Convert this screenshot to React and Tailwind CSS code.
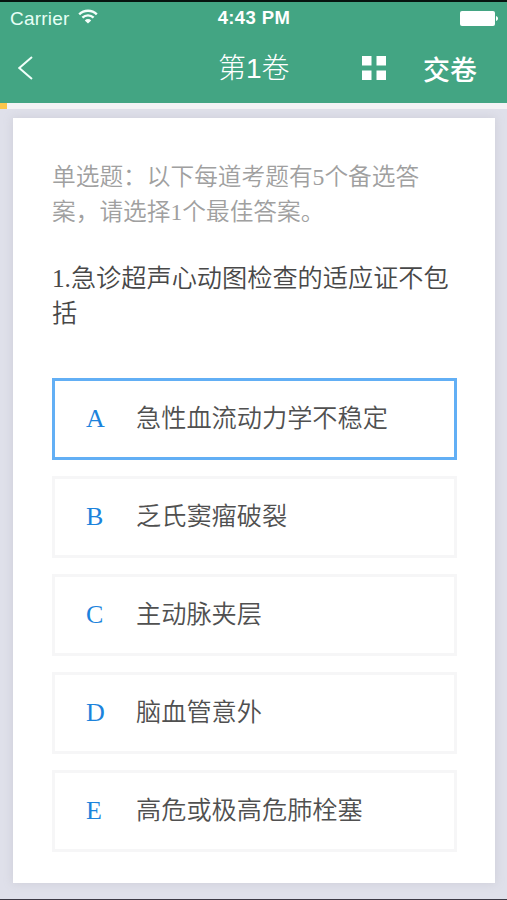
import React, { useState } from "react";

const options = [
  { key: "A", text: "急性血流动力学不稳定" },
  { key: "B", text: "乏氏窦瘤破裂" },
  { key: "C", text: "主动脉夹层" },
  { key: "D", text: "脑血管意外" },
  { key: "E", text: "高危或极高危肺栓塞" },
];

const StatusBar = () => {
  return (
    <div className="grid grid-cols-3 items-center h-8 pl-[10px] pr-[9px] font-['Liberation_Sans',sans-serif] text-[19px] leading-none">
      <div className="flex items-center gap-[9px] text-[#e6fff5]">
        <span className="tracking-[0.2px]">Carrier</span>
        <svg width="20" height="15" viewBox="0 0 20 15" fill="none" className="mb-[3px]">
          <path d="M1.2 5.3a12.6 12.6 0 0 1 17.6 0" stroke="#f4fffb" strokeWidth="2.4" />
          <path d="M4.4 8.7a8 8 0 0 1 11.2 0" stroke="#f4fffb" strokeWidth="2.4" />
          <path d="M10 14.6 6.8 11.4a4.6 4.6 0 0 1 6.4 0z" fill="#f4fffb" />
        </svg>
      </div>
      <span className="text-center font-bold text-[18.5px] tracking-[0.4px] whitespace-nowrap pt-px">
        4:43 PM
      </span>
      <svg width="38" height="15" viewBox="0 0 38 15" className="justify-self-end" fill="#fff">
        <rect width="35" height="15" rx="2" />
        <path d="M36 5c1.4.5 2 1.5 2 2.5s-.6 2-2 2.5z" />
      </svg>
    </div>
  );
};

const NavBar = () => {
  return (
    <div className="flex items-center h-[68px] pl-[18px] pr-[29px]">
      <button aria-label="返回" className="w-[200px]">
        <svg width="15" height="24" viewBox="0 0 15 24" fill="none">
          <path d="M14 1 1.3 12 14 23" stroke="#f0fffa" strokeWidth="2" />
        </svg>
      </button>
      <h1 className="w-[144px] pt-0.5 text-[28px] leading-none font-light whitespace-nowrap font-['Liberation_Sans','Noto_Sans_CJK_SC',sans-serif]">
        第1卷
      </h1>
      <button aria-label="答题卡" className="w-[61px]">
        <svg width="24" height="24" viewBox="0 0 24 24" fill="#fff">
          <rect width="9.5" height="9.5" />
          <rect x="14.5" width="9.5" height="9.5" />
          <rect y="14.5" width="9.5" height="9.5" />
          <rect x="14.5" y="14.5" width="9.5" height="9.5" />
        </svg>
      </button>
      <button className="text-[27px] leading-none font-medium whitespace-nowrap">交卷</button>
    </div>
  );
};

const App = () => {
  const [selected, setSelected] = useState("A");

  return (
    <div className="flex flex-col w-[507px] h-[900px] overflow-hidden bg-[#dfe0ea] border-t-2 border-t-[#07140f] border-b border-b-[#3c3a45] font-['Noto_Sans_CJK_SC',sans-serif]">
      <header className="flex flex-col h-[101px] bg-[#43a583] text-white">
        <StatusBar />
        <NavBar />
      </header>
      <div className="h-[6px] bg-[#f3f3f5]">
        <div className="w-[7px] h-full bg-[#fbc64b]" />
      </div>
      <main className="mt-[9px] ml-[13px] mr-3 h-[765px] bg-white shadow-[0_0_9px_1px_#d0d0da] pl-[39px] pr-[38px] pt-[42px]">
        <p className="text-[23.7px] leading-[35px] font-[350] text-[#a0a0a0] font-['Liberation_Serif','Noto_Sans_CJK_SC',sans-serif]">
          单选题：以下每道考题有5个备选答
          <br />
          案，请选择1个最佳答案。
        </p>
        <p className="mt-[31px] text-[25.2px] leading-[35px] text-[#484848] font-[350] whitespace-nowrap font-['Liberation_Serif','Noto_Sans_CJK_SC',sans-serif]">
          1.急诊超声心动图检查的适应证不包
          <br />括
        </p>
        <ul className="flex flex-col gap-4 mt-[47px]">
          {options.map((item) => (
            <li
              key={item.key}
              onClick={() => setSelected(item.key)}
              className={`flex items-center h-[82px] border-3 pl-[31px] ${
                selected === item.key ? "border-[#62aff5]" : "border-[#f6f6f7]"
              }`}
            >
              <span className="w-[50px] pb-0.5 text-[26px] text-[#1c83dc] font-['Liberation_Serif',serif]">
                {item.key}
              </span>
              <span className="text-[25.2px] font-[350] text-[#505050] pb-[5px]">{item.text}</span>
            </li>
          ))}
        </ul>
      </main>
    </div>
  );
};

export default App;
